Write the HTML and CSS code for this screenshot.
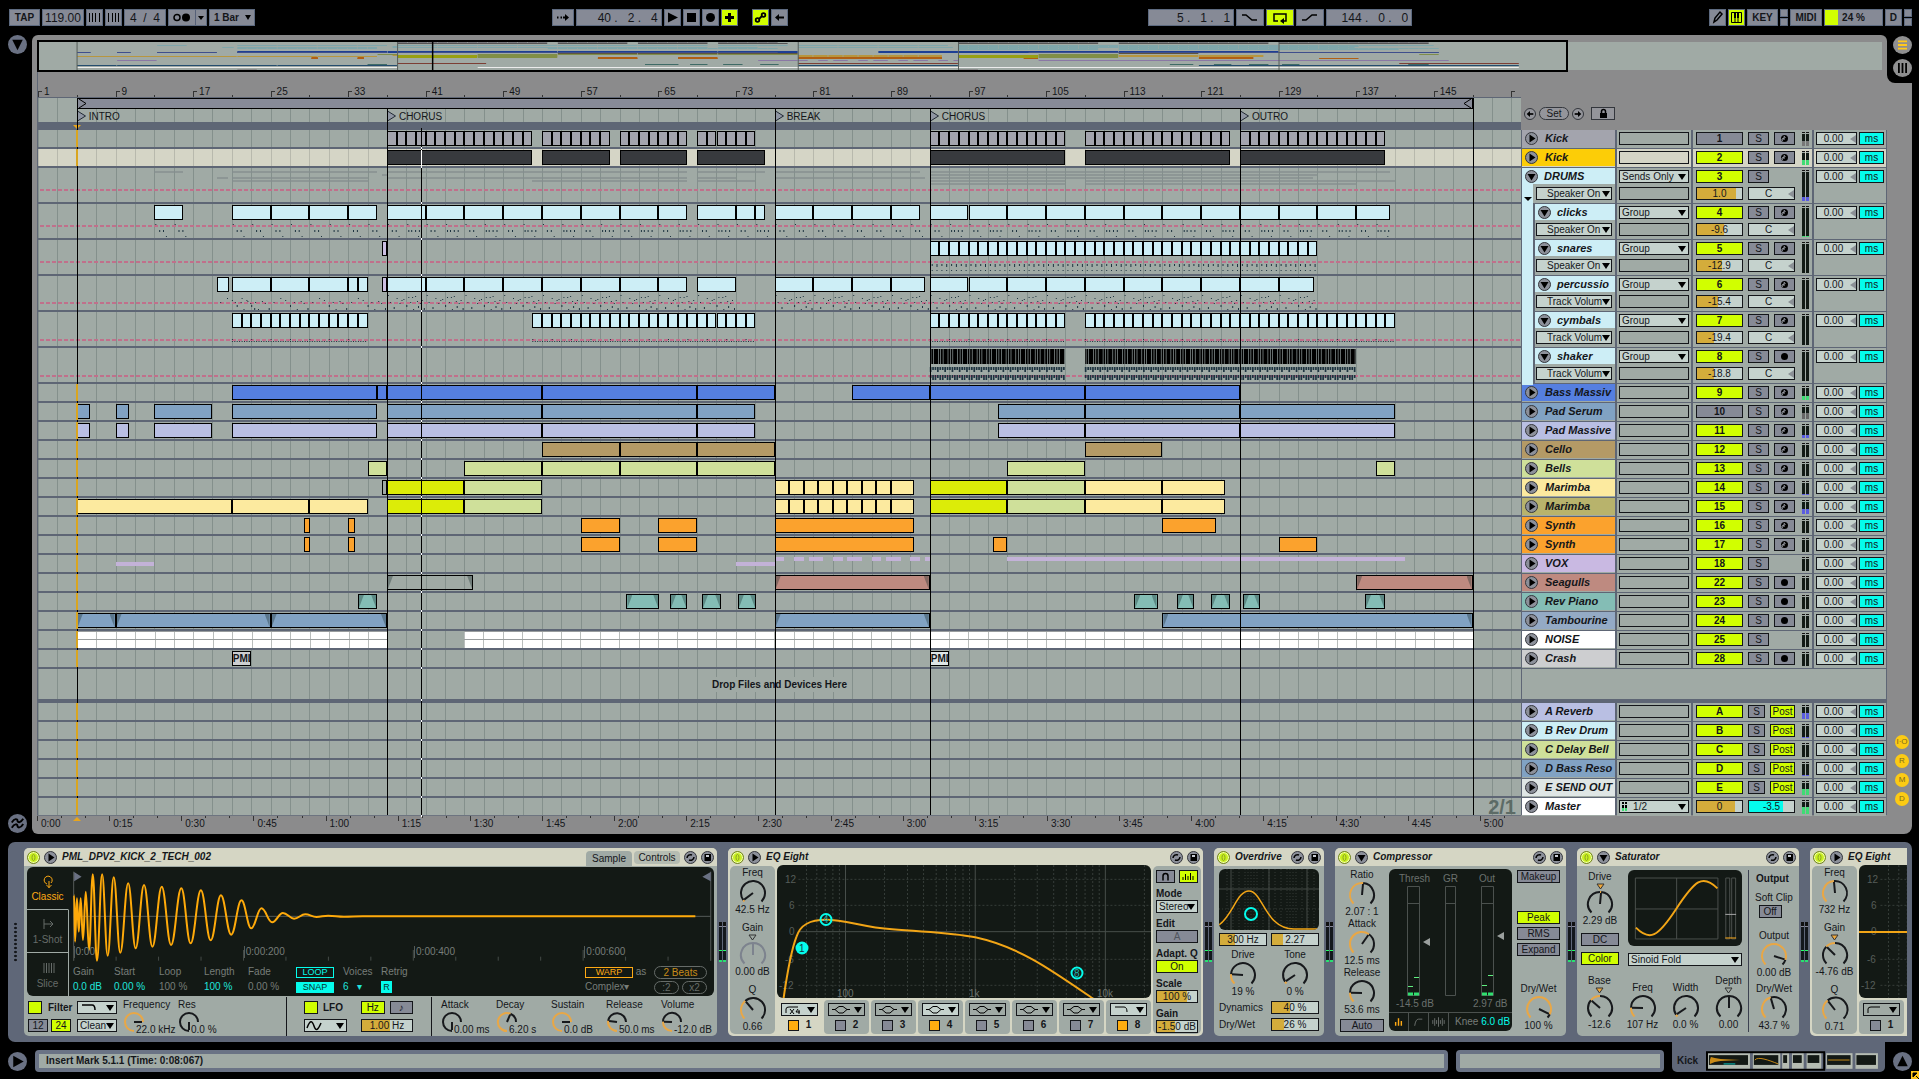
FILE: index.html
```html
<!DOCTYPE html>
<html lang="en">
<head>
<meta charset="utf-8">
<title>Arrangement</title>
<link rel="stylesheet" href="styles.css">
</head>
<body>
<header class="transport">
  <div class="tools g1">
    <button class="tb w31">TAP</button>
    <input class="tb num w42" aria-label="Tempo" value="119.00">
    <button class="tb w17" aria-label="Nudge down"><svg viewBox="0 0 15 15"><path d="M2.500 3v9M5.500 3v9M8.500 3v9M12.500 3v9" class="ln"/></svg></button>
    <button class="tb w17" aria-label="Nudge up"><svg viewBox="0 0 15 15"><path d="M2.500 3v9M6.500 3v9M9.500 3v9M12.500 3v9" class="ln"/></svg></button>
    <input class="tb num w42" aria-label="Time signature" value="4  /  4">
    <button class="tb w39" aria-label="Metronome"><svg viewBox="0 0 37 15"><circle cx="8" cy="7.500" r="3" class="ln15"/><circle cx="17" cy="7.500" r="4"/><path d="M26.500 0v15" stroke="#566078"/><path d="M29 6h6l-3 4z"/></svg></button>
    <span class="sel w46"><select class="tb bold" aria-label="Quantization"><option>1 Bar</option></select></span>
  </div>
  <div class="tools g2">
    <button class="tb w22" aria-label="Follow"><svg viewBox="0 0 20 15"><path d="M4 7.500h1.500M7.500 7.500h1.500M10 7.500h3" class="ln2"/><path d="M12 4l4 3.500-4 3.500z"/></svg></button>
    <input class="tb num w86 pos" aria-label="Position" value="40 .   2 .   4">
    <button class="tb w17" aria-label="Play"><svg viewBox="0 0 15 15"><path d="M3 2.500l10 5-10 5z"/></svg></button>
    <button class="tb w17" aria-label="Stop"><svg viewBox="0 0 15 15"><path d="M3 3h9v9h-9z"/></svg></button>
    <button class="tb w17" aria-label="Record"><svg viewBox="0 0 15 15"><circle cx="7.500" cy="7.500" r="4.500"/></svg></button>
    <button class="tb w17 on" aria-label="Overdub"><svg viewBox="0 0 15 15"><path d="M7.500 3v9M3 7.500h9" stroke="#000" stroke-width="3"/></svg></button>
    <button class="tb w17 on apart" aria-label="Automation arm"><svg viewBox="0 0 15 15"><g fill="none" stroke="#000" stroke-width="1.800"><circle cx="4.500" cy="10" r="1.800"/><circle cx="10.500" cy="5" r="1.800"/><path d="M6 9l3-3"/></g></svg></button>
    <button class="tb w17" aria-label="Back to arrangement"><svg viewBox="0 0 15 15"><path d="M6 7.500h6" class="ln2"/><path d="M3 7.500l4-3.500v7z"/></svg></button>
  </div>
  <div class="tools g3">
    <input class="tb num w86 pos" aria-label="Loop start" value="5 .   1 .   1">
    <button class="tb w28" aria-label="Punch in"><svg viewBox="0 0 26 15"><path d="M5 5h4l6 5h5" class="ln15"/></svg></button>
    <button class="tb w28 on" aria-label="Loop"><svg viewBox="0 0 26 15"><path d="M11 11H7V4h12v7h-4" class="ln15"/><path d="M17 8v6l-4-3z"/></svg></button>
    <button class="tb w28" aria-label="Punch out"><svg viewBox="0 0 26 15"><path d="M5 10h4l6-5h5" class="ln15"/></svg></button>
    <input class="tb num w86 pos" aria-label="Loop length" value="144 .   0 .   0">
  </div>
  <div class="tools g4">
    <button class="tb w17" aria-label="Draw"><svg viewBox="0 0 15 15"><path d="M4 12l1-4 5-6 2 2-5 6z" fill="none" stroke="#000" stroke-width="1.500"/></svg></button>
    <button class="tb w17 on" aria-label="Computer keyboard"><svg viewBox="0 0 15 15"><path d="M2.500 2.500h10v10h-10zM6 8v4.500M9 8v4.500" class="ln"/><path d="M5 3h2v5h-2zM8 3h2v5h-2z"/></svg></button>
    <button class="tb w31">KEY</button>
    <span class="leds"><i></i><i></i></span>
    <button class="tb w32">MIDI</button>
    <span class="tb w59 cpu">24 %</span>
    <button class="tb w17">D</button>
    <span class="leds"><i></i><i></i></span>
  </div>
</header>

<main class="main">
  <aside class="gutter">
    <button class="disc" aria-label="Show browser"><svg viewBox="0 0 20 20"><path d="M4.500 5h11l-5.500 11z" fill="#000"/></svg></button>
    <button class="disc" aria-label="Groove pool"><svg viewBox="0 0 20 20"><path d="M4 9c3-5 6-4 6-2s3 3 6-2M4 14.500c3-5 6-4 6-2s3 3 6-2" fill="none" stroke="#000" stroke-width="2"/></svg></button>
  </aside>
  <section class="work">
    <div class="overview" id="overview"></div>
    <div class="editor">
      <div class="top">
        <div class="scale">
          <div class="bars" id="bars"></div>
          <div class="loopline"><div class="loop" id="loop"></div></div>
          <div class="locators" id="locators"></div>
          <div class="scrub"><i></i></div>
        </div>
        <div class="setrow">
          <button class="mini" aria-label="Previous locator"><svg viewBox="0 0 12 12"><path d="M5 6h5" class="ln2"/><path d="M2 6l4-3.500v7z"/></svg></button>
          <button class="pill">Set</button>
          <button class="mini" aria-label="Next locator"><svg viewBox="0 0 12 12"><path d="M2 6h5" class="ln2"/><path d="M10 6l-4-3.500v7z"/></svg></button>
          <button class="lock" aria-label="Lock envelopes"><svg viewBox="0 0 22 11"><path d="M8 5h7v5h-7z"/><path d="M9.500 5V3.500a2 2 0 0 1 4 0V5" class="ln15"/></svg></button>
        </div>
      </div>
      <div id="tracks"></div>
      <div class="droprow"><div class="lane"><span>Drop Files and Devices Here</span></div><div class="void"></div></div>
      <div id="returns"></div>
      <div class="markers" id="markers"></div>
      <div class="fixed">2/1</div>
    </div>
    <div class="times" id="times"></div>
  </section>
  <aside class="rail">
    <div class="notch">
      <button class="view" aria-label="Arrangement view"><svg viewBox="0 0 20 20"><path d="M5 6h10M5 10h10M5 14h10" stroke="#ffc81c" stroke-width="2"/></svg></button>
      <button class="view" aria-label="Session view"><svg viewBox="0 0 20 20"><path d="M6 4.500v11M10 4.500v11M14 4.500v11" stroke="#000" stroke-width="2"/></svg></button>
    </div>
    <div class="sections"><button>I·O</button><button>R</button><button>M</button><button>D</button></div>
  </aside>
</main>

<section class="chain" id="chain"></section>

<footer class="status">
  <button class="disc" aria-label="Info view"><svg viewBox="0 0 20 20"><path d="M5.500 4l11 6-11 6z" fill="#000"/></svg></button>
  <div class="info grow">Insert Mark 5.1.1 (Time: 0:08:067)</div>
  <div class="info w208"></div>
  <div class="tab"><span>Kick</span><svg class="thumbs" viewBox="0 0 178 20" id="thumbs"></svg></div>
  <button class="disc last" aria-label="Hide detail"><svg viewBox="0 0 20 20"><path d="M4.500 15h11l-5.500-11z" fill="#000"/></svg></button>
  <svg class="corner" viewBox="0 0 8 8"><path d="M0 0h8v8h-8z" fill="#ffc81c"/><path d="M2 2h4l-4 4zM5 5l3 3" stroke="#000" fill="#000"/></svg>
</footer>
<script src="app.js"></script>
</body>
</html>
```

FILE: styles.css
```css
:root {
  --lane: #a0aaa5;
  --line: #5e6675;
  --grid: #84908c;
  --panel: #8b8b8c;
  --btn: #868a96;
  --field: #c5d2cd;
  --on: #d1ff00;
  --cream: #d5d6c4;
  --cyan: #05fcec;
  --gold: #d4ac3b;
  --amber: #ffaa14;
  --screen: #131915;
  --dim: #777d79;
  --ink: #14161a;
}
* { box-sizing: border-box; }
body {
  margin: 0;
  min-height: 100vh;
  background: #000;
  color: var(--ink);
  font: 10px/12px "Liberation Sans", Arial, sans-serif;
  display: flex;
  flex-direction: column;
  overflow-x: hidden;
}
button, input, select { font: inherit; color: inherit; margin: 0; padding: 0; border-radius: 0; min-width: 0; }
button { display: block; line-height: 11px; }
svg { display: block; width: 100%; height: 100%; }
.ln { fill: none; stroke: #000; }
.ln15 { fill: none; stroke: #000; stroke-width: 1.5; }
.ln2 { fill: none; stroke: #000; stroke-width: 2; }

/* transport bar */
.transport {
  height: 35px;
  padding: 9px 7px 9px 9px;
  display: grid;
  grid-template-columns: auto 297fr auto 361fr auto 297fr auto;
}
.tools { display: flex; gap: 2px; }
.g1 { grid-column: 1; } .g2 { grid-column: 3; } .g3 { grid-column: 5; } .g4 { grid-column: 7; }
.tb { height: 17px; background: var(--btn); border: 1px solid #5d6a80; font-weight: bold; text-align: center; line-height: 15px; }
.num { font-size: 12px; font-weight: normal; }
.pos { text-align: right; padding-right: 3px; white-space: pre; }
.on { background: var(--on); }
.apart { margin-left: 12px; }
.w17 { width: 17px; } .w22 { width: 22px; } .w28 { width: 28px; } .w31 { width: 31px; } .w32 { width: 32px; }
.w39 { width: 39px; } .w42 { width: 42px; } .w46 { width: 46px; } .w59 { width: 59px; } .w86 { width: 86px; }
.w208 { width: 208px; }
.cpu { background: linear-gradient(90deg, var(--on) 13px, var(--btn) 13px); }
.leds { width: 8px; display: flex; flex-direction: column; gap: 1px; }
.leds i { flex: 1; background: var(--btn); border: 1px solid #5d6a80; }

/* drop-downs */
.sel { position: relative; display: block; height: 13px; }
.sel select { appearance: none; width: 100%; height: 100%; background: var(--field); border: 1px solid var(--ink); padding: 0 0 0 2px; line-height: 11px; display: block; outline: 0; }
.sel::after { content: ""; position: absolute; right: 3px; top: 4px; border: 4px solid transparent; border-top: 6px solid #000; border-bottom: 0; pointer-events: none; }
.sel svg { position: absolute; left: 2px; top: 0; width: 24px; height: 13px; pointer-events: none; }
.tools .sel { height: 17px; }
.tools .sel select { background: var(--btn); border-color: #5d6a80; padding-left: 4px; font-weight: bold; text-align: left; }
.tools .sel::after { border-width: 5px 3px 0; top: 6px; right: 4px; }
.sel.off select { background: var(--lane); }

/* main frame */
.main { display: flex; margin-right: 7px; }
.gutter { width: 32px; padding: 0 5px 1px 8px; display: flex; flex-direction: column; justify-content: space-between; }
.disc { width: 19px; height: 19px; border: 0; border-radius: 50%; background: #6a7183; }
.work { flex: 1; min-width: 0; background: var(--panel); border-radius: 6px 6px 0 6px; padding: 5px 0 0 5px; }
.rail { width: 25px; background: var(--panel); border-radius: 0 8px 8px 0; display: flex; flex-direction: column; justify-content: space-between; }
.notch { height: 48px; width: 32px; background: #000; border-bottom-left-radius: 8px; padding: 1px 6px; display: flex; flex-direction: column; gap: 5px; }
.view { width: 19px; height: 18px; border: 0; border-radius: 50%; background: #8f8f90; }
.sections { padding: 0 0 28px 8px; display: flex; flex-direction: column; gap: 5px; }
.sections button { width: 14px; height: 14px; border: 0; border-radius: 50%; background: #fccb14; color: #7b6a1e; font-size: 8px; line-height: 14px; }

/* overview strip */
.overview { position: relative; height: 32px; margin-right: 5px; padding: 2px 0; }
.overview svg { background: var(--lane); }
.overview .frame { position: absolute; left: 0; top: 0; height: 32px; width: 83%; border: 2px solid #000; }

/* rulers */
.editor { position: relative; }
.top { display: flex; }
.scale { flex: 1; min-width: 0; border-left: 1px solid var(--line); }
.bars { position: relative; height: 26px; border-bottom: 1px solid var(--line); overflow: hidden; }
.bars span { position: absolute; bottom: 0; height: 6px; border-left: 1px solid #333; padding-left: 5px; line-height: 2px; }
.bars span.minor { height: 2px; }
.bars span::before { content: ""; position: absolute; left: 0; top: 0; width: 3px; border-top: 1px solid #333; }
.bars span.minor::before { display: none; }
.loopline, .locators, .lane {
  background: repeating-linear-gradient(90deg, var(--grid) 0 1px, var(--lane) 1px calc(100% / 76.5));
}
.loopline { height: 11px; position: relative; }
.loop { position: absolute; top: 0; height: 11px; background: #878b98; border: 1px solid #000; }
.loop svg { position: absolute; top: 0; width: 10px; height: 9px; left: 0; }
.loop svg + svg { left: auto; right: 0; }
.locators { height: 13px; position: relative; }
.locators span { position: absolute; top: 0; padding-left: 12px; line-height: 15px; white-space: nowrap; }
.locators svg { position: absolute; left: 0; top: 1px; width: 10px; height: 12px; }
.scrub { height: 8px; background: var(--line); position: relative; }
.scrub i { position: absolute; left: calc(100% * 4 / 153 - 4px); top: 3px; border: 4px solid transparent; border-top-color: #e9a51c; border-bottom: 0; }
.setrow { width: 366px; display: flex; align-items: flex-end; padding: 0 0 10px 3px; gap: 3px; }
.mini { width: 12px; height: 12px; border: 1px solid #33363c; border-radius: 50%; background: #94959b; }
.pill { width: 30px; height: 13px; border: 1px solid #33363c; border-radius: 7px; background: #94959b; }
.lock { width: 24px; height: 13px; border: 1px solid #33363c; background: #94959b; margin-left: 4px; }

/* tracks */
.track { display: flex; height: 19px; border-bottom: 2px solid var(--line); border-left: 1px solid var(--line); }
.track.tall { height: 36px; }
.track.mst { height: 17px; border-bottom: 0; }
.lane { flex: 1; min-width: 0; position: relative; }
.track.sel-track .lane { background: repeating-linear-gradient(90deg, #b8b9ad 0 1px, #d5d5c6 1px calc(100% / 76.5)); }
.track:not(.tall) .lane::after { content: ""; position: absolute; z-index: 2; top: 0; bottom: 0; left: calc(100% * 4 / 153 - 1px); width: 2px; background: #d9a520; }
.lane::before { content: ""; position: absolute; z-index: 2; bottom: -2px; height: 2px; width: 1px; left: calc(100% * 39.55 / 153); background: #fff; }
.sel-track .lane::before { height: 18px; }
.lane > svg.notes { position: absolute; inset: 0; }
.auto { position: absolute; left: 2px; right: 0; height: 2px; background: repeating-linear-gradient(90deg, #c0708b 0 4px, transparent 4px 6px); }
.clip { position: absolute; top: 1px; height: 15px; border: 1px solid #000; overflow: hidden; font: bold 10px/13px "Liberation Sans", Arial, sans-serif; white-space: nowrap; }
.fade::before, .fade::after { content: ""; position: absolute; top: 0; bottom: 0; left: 0; width: 5px; background: rgba(20, 40, 40, .35); clip-path: polygon(0 0, 100% 0, 0 100%); }
.fade::after { left: auto; right: 0; clip-path: polygon(0 0, 100% 0, 100% 100%); }
.bar { position: absolute; height: 4px; background: #c3b2d8; }
.ghost { position: absolute; height: 2px; background: #858d8e; opacity: .7; }
.fill { position: absolute; top: 0; height: 17px; background: linear-gradient(#999d9e 0 1px, transparent 1px 8px, #999d9e 8px 9px, transparent 9px), repeating-linear-gradient(90deg, #b9bdbc 0 1px, #fff 1px 19.4px); }
.grey { background: #a3a4ad; } .dark { background: #383a3e; } .ice { background: #cdeef6; } .lilac { background: #cbbfe2; }
.blue { background: #557fe0; } .steel { background: #81a2c3; } .peri { background: #b9bfe3; } .tan { background: #b49a66; }
.lime { background: #cfe09a; } .acid { background: #dcec08; } .butter { background: #fcea9f; } .olive { background: #b8b36c; }
.orange { background: #fba22d; } .mauve { background: #c9b9e2; } .rose { background: #be8a80; } .teal { background: #84bdb5; }
.haze { background: #94aac5; } .white { background: #fff; } .silver { background: #cdced0; } .none { background: transparent; }
.gold { background: #fccd07; } .pale { background: #dfe6e5; } .black { background: #000; }

.markers { position: absolute; top: 37px; bottom: 0; left: 1px; right: 366px; pointer-events: none; z-index: 1; }
.markers i { position: absolute; top: 0; bottom: 0; width: 1px; background: #000; }
.markers i.play { top: 19px; }
.fixed { position: absolute; right: 371px; bottom: -2px; font: bold 20px/20px "Liberation Sans", Arial, sans-serif; color: #5c6b66; }
.droprow { display: flex; height: 34px; border-bottom: 4px solid var(--line); border-left: 1px solid var(--line); }
.droprow .lane { text-align: center; font-weight: bold; line-height: 32px; }
.droprow .lane span { padding: 2px; background: var(--lane); }
.void { width: 366px; background: var(--lane); border: 1px solid var(--line); border-width: 0 1px; }

/* track heads */
.head { width: 366px; display: grid; grid-template-columns: 93px 74px 119px 72px; column-gap: 2px; background: var(--line); border: 1px solid var(--line); border-width: 0 1px; }
.head > div { background: var(--lane); }
.sel-track .head > div { background: #d5d5c6; }
.name { position: relative; }
.title { height: 17px; display: flex; align-items: center; gap: 7px; padding-left: 3px; font: italic bold 11px/17px "Liberation Sans", Arial, sans-serif; white-space: nowrap; overflow: hidden; }
.fold { flex: none; width: 13px; height: 13px; border: 1px solid #34363c; border-radius: 50%; background: #8c909a; }
.tall .title { height: 16px; gap: 6px; }
.name .sel { margin: 3px 3px 0 14px; }
.name .sel select { padding-left: 10px; }
.name .sel::after { right: 2px; }
.group .name::before, .child .name::before { content: ""; position: absolute; left: 0; top: 16px; bottom: -2px; width: 11px; background: #cdeef6; z-index: 1; }
.child .name::before { top: 0; }
.child .name::after { content: ""; position: absolute; left: 11px; top: 0; bottom: 0; width: 2px; background: var(--line); }
.child .title { margin-left: 13px; }
.group .name > i { position: absolute; z-index: 2; left: 2px; top: 29px; border: 4px solid transparent; border-top-color: #000; border-bottom: 0; }
.io { padding: 2px; display: flex; flex-direction: column; gap: 4px; }
.slot { height: 13px; border: 1px solid var(--ink); }
.mix { padding: 2px 3px; display: flex; gap: 7px; }
.ctl { display: grid; grid-template-columns: 47px 47px; column-gap: 5px; row-gap: 4px; grid-auto-rows: 13px; }
.pair { display: flex; justify-content: space-between; }
.act, .sw, .val { height: 13px; border: 1px solid var(--ink); text-align: center; line-height: 11px; width: 100%; }
.act { font-weight: bold; background: var(--on); }
.act.off, .sw { background: var(--btn); }
.pair .sw { width: 21px; }
.ret .pair .sw { width: 17px; }
.ret .pair .post { width: 25px; background: var(--on); }
.val { background: linear-gradient(90deg, var(--gold) var(--f, 0%), var(--field) 0); display: block; outline: 0; }
.val.cy { background: linear-gradient(90deg, var(--cyan) var(--f), var(--field) 0); }
.meter { width: 7px; height: 14px; display: flex; gap: 1px; }
.tall .meter { height: 31px; }
.meter i { flex: 1; background: linear-gradient(0deg, var(--c) var(--l), #111a15 0); border-top: 1px solid #111; box-shadow: inset 0 1px var(--lane); }
.dly { padding: 2px; display: flex; justify-content: space-between; }
.knobtri { position: relative; display: block; }
.knobtri::after { content: ""; position: absolute; right: 1px; top: 3px; border: 4px solid transparent; border-right: 6px solid #8b9096; border-left: 0; }
.dly .knobtri { width: 41px; }
.knobtri .val { padding-right: 6px; }
.ms { width: 25px; height: 13px; border: 1px solid var(--ink); background: var(--cyan); }

.times { position: relative; height: 19px; border-top: 1px solid #6d7480; margin-right: 366px; overflow: hidden; }
.times span { position: absolute; top: 0; height: 5px; border-left: 1px solid #333; padding-left: 3px; line-height: 16px; white-space: nowrap; }
.times span.minor { height: 2px; }
.times i { position: absolute; left: calc(100% * 4 / 153 - 3px); top: 1px; border: 4px solid transparent; border-bottom-color: #e9a51c; border-top: 0; }

/* device chain */
.chain { margin: 8px 7px 0 8px; background: #5f6778; border-radius: 7px 7px 0 7px; padding: 6px 5px 6px 0; display: flex; min-height: 200px; }
.grip { width: 16px; align-self: center; height: 40px; background: radial-gradient(#14161a 1px, transparent 2px) 5px 0 / 5px 4px repeat-y; }
.device { height: 188px; background: var(--lane); border-radius: 5px; overflow: hidden; display: flex; flex-direction: column; }
.d-sim { flex: 0 0 693px; } .d-eq { flex: 0 0 475px; background: var(--cream); } .d-over { flex: 0 0 110px; } .d-comp { flex: 0 0 231px; } .d-sat { flex: 0 0 222px; }
.d-eq.last { flex: 1 1 0; min-width: 0; border-radius: 5px 0 0 5px; }
.link { flex: 0 0 11px; display: flex; justify-content: center; align-self: center; gap: 1px; height: 40px; }
.link i { width: 3px; background: linear-gradient(#111 0 4px, #889 4px 5px, #14181c 5px 28px, #2f6 28px 29px, #14181c 29px 38px, #28e070 38px); }
.dh { height: 18px; flex: none; background: var(--cream); display: flex; align-items: center; gap: 4px; padding: 0 3px; line-height: 16px; white-space: nowrap; }
.dh b { flex: 1; padding-left: 1px; font-style: italic; }
.pw, .rd { flex: none; width: 13px; height: 13px; border-radius: 50%; border: 1px solid #34363c; background: #8c909a; }
.pw { background: #c8f020; border-color: #6f8020; box-shadow: inset 0 0 0 1px #f4ffb0; }
.dtab { align-self: flex-end; height: 15px; width: 46px; border: 0; border-radius: 4px 4px 0 0; background: var(--lane); margin-right: -2px; }
.dtab + .dtab { background: #b5bcb2; border-radius: 4px; height: 13px; align-self: center; margin-right: 0; }
.scr { background: var(--screen); border-radius: 6px; color: var(--dim); overflow: hidden; }
.btn { height: 13px; border: 1px solid var(--ink); background: var(--btn); text-align: center; width: 100%; }
.btn.on { background: var(--on); }
.btn.mute { color: #50555f; }

/* simpler */
.sim { height: 129px; margin: 1px 3px 0; display: grid; grid-template-columns: 42px 1fr; }
.modes { display: grid; grid-template-rows: 43px 43px 43px; border-right: 1px solid var(--lane); }
.modes button { border: 0; border-bottom: 1px solid var(--lane); background: none; color: #666c69; }
.modes button:first-child { color: var(--amber); border-right: 1px solid var(--screen); margin-right: -1px; }
.modes button:last-child { border-bottom: 0; }
.modes svg { width: 20px; height: 14px; margin: 0 auto 3px; }
.wave { position: relative; height: 96px; }
.wave span { position: absolute; top: 79px; line-height: 12px; border-left: 1px solid #555b58; padding-left: 1px; }
.prm { display: grid; grid-template-columns: 41px 45px 45px 44px 48px 47px 38px 1fr 48px 21px 55px; grid-template-rows: 14px 14px; row-gap: 1px; padding: 2px 5px 0 4px; align-items: center; white-space: nowrap; }
.c { color: #1fe4dc; }
.prm button { height: 11px; line-height: 9px; width: 38px; font-size: 9px; background: none; border: 1px solid var(--cyan); color: var(--cyan); }
.prm button.full { background: var(--cyan); color: #073030; }
.prm button.r { width: 11px; height: 12px; }
.prm button.warp { width: 48px; border-color: var(--amber); color: var(--amber); }
.prm button.rnd { width: 53px; border: 1px solid #666c69; color: #c78c1a; border-radius: 7px; height: 13px; font-size: 10px; line-height: 11px; }
.prm button.half { width: 25px; color: #666c69; }
.prm .two { display: flex; gap: 3px; }
.strip { flex: 1; display: flex; padding: 2px 1px 0 4px; }
.strip .sw2 { width: 14px; height: 13px; appearance: none; margin: 0; border: 1px solid var(--ink); background: var(--on); display: block; }
.flt { display: grid; grid-template-columns: 45px 40px; row-gap: 5px; column-gap: 4px; width: 95px; align-content: start; padding-top: 3px; }
.flt .row, .lfo .row { display: flex; gap: 5px; align-items: center; }
.flt label, .lfo label { font-weight: bold; }
.flt .row { gap: 3px; }
.flt .row.first { gap: 6px; }
.flt .btn { width: 20px; }
.hk { width: 55px; height: 38px; position: relative; white-space: nowrap; padding-top: 1px; }
.hk svg { width: 22px; height: 22px; }
.hk span { position: absolute; left: 13px; bottom: 0; }
.gap { flex: 1; }
.rule { width: 1px; background: var(--ink); margin: -1px 0 0; }
.lfo { width: 144px; padding: 3px 17px 0; display: grid; grid-template-columns: 43px 52px; column-gap: 14px; row-gap: 5px; align-content: start; }
.envs { display: flex; padding-left: 9px; }

/* round controls */
.vk { display: flex; flex-direction: column; align-items: center; white-space: nowrap; line-height: 12px; }
.vk svg.k { width: 28px; height: 25px; }
.vk .tri { width: 9px; height: 7px; }

/* eq */
.eq { flex: 1; display: grid; grid-template-columns: 45px 374px 48px; column-gap: 2px; padding: 0 2px 2px; grid-template-rows: 168px; }
.col { background: var(--lane); border-radius: 5px; display: flex; flex-direction: column; justify-content: space-between; padding: 1px 0; }
.eqmid { display: flex; flex-direction: column; gap: 2px; }
.eqmid .scr { height: 133px; flex: none; margin-top: -1px; }
.bands { display: grid; grid-template-columns: repeat(8, 45px); column-gap: 2px; flex: 1; }
.band { background: var(--lane); border-radius: 4px; padding: 3px 4px; }
.band.cur { background: var(--cream); }
.band label { display: flex; align-items: center; justify-content: center; gap: 7px; font-weight: bold; margin-top: 3px; }
.band input { appearance: none; width: 11px; height: 11px; margin: 0; border: 1px solid var(--ink); background: var(--btn); }
.band input:checked { background: #ffad10; }
.side { background: var(--lane); border-radius: 5px; padding: 4px 3px; display: flex; flex-direction: column; }
.side b { margin-top: 5px; }
.side label { font-weight: bold; margin-top: 5px; }
.side > div { display: flex; justify-content: space-between; }
.side > div .btn { width: 19px; }

/* overdrive */
.over { flex: 1; padding: 3px 5px 5px; display: flex; flex-direction: column; gap: 3px; }
.over .scr { height: 61px; }
.pairs { display: grid; grid-template-columns: 48px 48px; column-gap: 4px; row-gap: 4px; align-items: center; }

/* compressor */
.comp { flex: 1; display: grid; grid-template-columns: 44px 123px 43px; column-gap: 5px; padding: 3px 5px 5px; }
.comp .btn.auto-rel { margin-top: 3px; }
.comp .scr { display: flex; flex-direction: column; height: 162px; }
.comp .foot { height: 19px; border-top: 1px solid #4b514e; display: grid; grid-template-columns: 20px 20px 20px 1fr; line-height: 18px; }
.comp .foot > * { border-right: 1px solid #4b514e; }
.comp .foot > :last-child { border: 0; padding-left: 6px; }
.comp .foot .c { color: var(--cyan); }
.comp svg.gr { height: 143px; }
.stack { display: flex; flex-direction: column; gap: 3px; padding-top: 1px; }
.stack .top1 { margin-bottom: 25px; }
.stack .vk { margin-top: 24px; }

/* saturator */
.sat { flex: 1; display: grid; grid-template-columns: 172px 1fr; padding: 4px 0 5px; }
.satl { border-right: 1px solid #3c4150; display: grid; grid-template-columns: 46px 1fr; grid-template-rows: 97px 1fr; }
.satl .leftc { padding: 1px 4px 0; }
.satl .leftc .btn { margin-top: 6px; }
.satl .rightc { padding: 0 6px 0 5px; }
.satl .rightc .scr { height: 76px; margin-bottom: 7px; }
.satl .four { grid-column: 1 / 3; display: grid; grid-template-columns: repeat(4, 43px); align-items: end; padding-left: 1px; padding-bottom: 1px; }
.satr { display: flex; flex-direction: column; align-items: center; }
.satr .btn { width: 23px; margin: 1px 8px 12px 0; }
.satr b { align-self: flex-start; padding-left: 7px; margin: 3px 0 7px; }
.satr .vk + .vk { margin-top: 4px; }

/* status */
.status { display: flex; gap: 8px; padding: 8px 7px 7px 8px; position: relative; height: 37px; }
.status .disc { margin-top: 2px; flex: none; }
.info { height: 22px; border: 4px solid #6a7385; border-radius: 4px; background: var(--lane); font-weight: bold; line-height: 14px; padding-left: 7px; }
.grow { flex: 1; }
.tab { margin-top: -8px; height: 30px; width: 213px; background: #5f6778; border-radius: 0 0 5px 5px; padding: 9px 5px 1px 5px; display: flex; gap: 8px; font-weight: bold; line-height: 20px; }
.thumbs { width: 178px; height: 20px; }
.corner { position: absolute; right: 0; bottom: 0; width: 8px; height: 8px; }
```

FILE: app.js
```js
const BARS = 153;
const $ = id => document.getElementById(id);
const pct = (b, total = BARS) => ((b - 1) / total * 100).toFixed(3) + '%';
const wid = (a, b, total = BARS) => ((b - a) / total * 100).toFixed(3) + '%';

// Cuts a bar range into clips of equal length; the last one may be shorter.
const cut = (from, to, step) => {
  const out = [];
  for (let a = from; a < to; a += step) out.push([a, Math.min(a + step, to)]);
  return out;
};
const chop = pts => pts.slice(1).map((p, i) => [pts[i], p]);

const hits = [[37, 52], [53, 60], [61, 68], [69, 76], [93, 107], [109, 124], [125, 140]];
const pad = [[5, 6.4], [9, 10.4], [13, 19], [21, 36], [37, 53], [53, 69], [69, 75], [100, 109], [109, 125], [125, 141]];
const stabs = chop([77, 78.5, 80, 81.5, 83, 84.5, 86, 87.5, 89, 91.4]);
const piano = [[34, 36], [61.7, 65.1], [66.2, 68], [69.5, 71.5], [73.2, 75.1], [114.1, 116.5], [118.5, 120.3], [122, 124], [125.3, 127.1], [137.9, 140]];
const hues = (h, list) => list.map(c => [c[0], c[1], h]);

const tracks = [
  { n: 'Kick', c: 'grey', id: '1', off: 1, rec: 'm', oy: 0, oc: '#77777c', m: ['#777', 40], clips: hits.flatMap(h => cut(h[0], h[0] === 69 ? 75 : h[1], 1)) },
  { n: 'Kick', c: 'gold', id: '2', rec: 'm', picked: 1, oy: 1, oc: '#555', m: ['#3fdc74', 35], clips: hues('dark', hits) },
  { n: 'DRUMS', c: 'ice', id: '3', group: 1, io: 'Sends Only', dev: 'Speaker On', vol: ['1.0', 86], auto: 21, m: ['#5a5ce0', 14], ghosts: [
    [13, 16, 3], [21, 36, 3], [19.5, 20.6, 9], [21, 35, 9], [21, 35, 12], [36.5, 37, 6], [37, 68, 3], [69, 76, 3], [77, 92, 3], [93, 140.5, 3],
    [93, 133, 6], [37, 68, 9], [69, 73, 9], [77, 92.5, 9], [93, 132.5, 9], [52, 68, 12], [69, 75, 12], [93, 107, 12], [109, 141, 12], [93, 107, 15], [109, 137, 15]] },
  { n: 'clicks', c: 'ice', id: '4', child: 1, io: 'Group', dev: 'Speaker On', vol: ['-9.6', 60], auto: 21, rec: 'm', oy: 3, oc: '#7fa6ab', m: ['#3fdc74', 4], notes: 'clicks',
    clips: [[13, 16], ...cut(21, 36, 4), ...cut(37, 68, 4), [69, 73], [73, 75], [75, 76], ...cut(77, 92, 4), ...cut(93, 140.5, 4)] },
  { n: 'snares', c: 'ice', id: '5', child: 1, io: 'Group', dev: 'Speaker On', vol: ['-12.9', 55], auto: 21, rec: 'm', oy: 4, oc: '#7fa6ab', m: ['#111', 0], notes: 'snares',
    clips: [[36.5, 37, 'lilac'], ...cut(93, 133, 1)] },
  { n: 'percussio', c: 'ice', id: '6', child: 1, io: 'Group', dev: 'Track Volum', vol: ['-15.4', 47], auto: 26, rec: 'm', oy: 5, oc: '#7fa6ab', m: ['#111', 0], notes: 'perc',
    clips: [[19.5, 20.7], ...cut(21, 33, 4), [33, 34], [34, 35], [36.5, 37, 'lilac'], ...cut(37, 68, 4), [69, 73], ...cut(77, 92.5, 4), ...cut(93, 132.6, 4)] },
  { n: 'cymbals', c: 'ice', id: '7', child: 1, io: 'Group', dev: 'Track Volum', vol: ['-19.4', 38], auto: 27, rec: 'm', oy: 6, oc: '#7fa6ab', m: ['#111', 0], notes: 'cym',
    clips: [...cut(21, 35, 1), ...cut(52, 75, 1), ...cut(93, 107, 1), ...cut(109, 141, 1)] },
  { n: 'shaker', c: 'ice', id: '8', child: 1, io: 'Group', dev: 'Track Volum', vol: ['-18.8', 38], auto: 27, rec: 'a', oy: 7, oc: '#7fa6ab', m: ['#111', 0], notes: 'shaker',
    clips: [[93, 107, 'black'], [109, 137, 'black']] },
  { n: 'Bass Massiv', c: 'blue', id: '9', rec: 'm', oy: 9, oh: 2, oc: '#1d3f94', m: ['#3fdc74', 28], clips: [[21, 36], [36, 37], [37, 53], [53, 69], [69, 77], [85, 93], [93, 109], [109, 125]] },
  { n: 'Pad Serum', c: 'steel', id: '10', off: 1, rec: 'm', oy: 10, oc: '#34527f', m: ['#666', 50], clips: pad },
  { n: 'Pad Massive', c: 'peri', id: '11', rec: 'm', oy: 10, oc: '#3f4f8c', m: ['#5a5ce0', 20], clips: pad },
  { n: 'Cello', c: 'tan', id: '12', rec: 'm', oy: 11, oc: '#5f553f', m: ['#111', 0], clips: [[53, 61], [61, 69], [69, 77], [109, 117]] },
  { n: 'Bells', c: 'lime', id: '13', rec: 'm', oy: 12, oc: '#7f8d4a', m: ['#111', 0], clips: [[35, 37], [45, 53], [53, 61], [61, 69], [69, 77], [101, 109], [139, 141]] },
  { n: 'Marimba', c: 'butter', id: '14', rec: 'm', oy: 13, oc: '#b7963f', m: ['#5a5ce0', 6], clips: [[36.5, 37, 'none'], [37, 45, 'acid'], [45, 53, 'lime'], ...stabs, [93, 101, 'acid'], [101, 109, 'lime'], [109, 117], [117, 123.5]] },
  { n: 'Marimba', c: 'olive', id: '15', rec: 'm', oy: 14, oc: '#b7963f', m: ['#5a5ce0', 42], clips: [...hues('butter', [[5, 21], [21, 29], [29, 35]]), [37, 45, 'acid'], [45, 53, 'lime'], ...hues('butter', stabs), [93, 101, 'acid'], [101, 109, 'lime'], ...hues('butter', [[109, 117], [117, 123.5]])] },
  { n: 'Synth', c: 'orange', id: '16', rec: 'm', oy: 15, oh: 2, oc: '#b05f14', m: ['#111', 0], clips: [[28.4, 29.1], [33, 33.7], [57, 61], [65, 69], [77, 91.4], [117, 122.5]] },
  { n: 'Synth', c: 'orange', id: '17', rec: 'm', oy: 16, oc: '#b05f14', m: ['#111', 0], clips: [[28.4, 29.1], [33, 33.7], [57, 61], [65, 69], [77, 91.4], [99.5, 101], [129, 133]] },
  { n: 'VOX', c: 'mauve', id: '18', oy: 18, oc: '#8a78a4', m: ['#111', 0], bars: [[9, 13, 7], [73, 77, 7], [77, 78, 2], [79, 80, 2], [80.5, 82, 2], [83, 84, 2], [84.5, 86, 2], [87, 88, 2], [88.5, 90, 2], [91, 92, 2], [92.5, 93, 2], [101, 142, 2]] },
  { n: 'Seagulls', c: 'rose', id: '22', rec: 'a', fade: 1, oy: 21, oc: '#7c3f35', m: ['#111', 0], clips: [[37, 45.9, 'none'], [77, 93], [137, 149]] },
  { n: 'Rev Piano', c: 'teal', id: '23', rec: 'a', fade: 1, oy: 22, oc: '#3f6b66', m: ['#111', 0], clips: piano },
  { n: 'Tambourine', c: 'haze', id: '24', rec: 'a', fade: 1, oy: 23, oc: '#244c6e', m: ['#111', 0], clips: hues('steel', [[5, 9], [9, 25], [25, 37], [77, 93], [117, 149]]) },
  { n: 'NOISE', c: 'white', id: '25', oy: 25, oc: '#ececec', m: ['#111', 0], fills: [[5, 37], [45, 149]] },
  { n: 'Crash', c: 'silver', id: '28', rec: 'a', oy: 27, oc: '#8a8a8a', m: ['#111', 0], clips: [[21, 23, 'silver', 'PML'], [93, 95, 'pale', 'PML']] }
];
const returns = [
  { n: 'A Reverb', c: 'peri', id: 'A', ret: 1, m: ['#5a5ce0', 45] },
  { n: 'B Rev Drum', c: 'ice', id: 'B', ret: 1, m: ['#5a5ce0', 6] },
  { n: 'C Delay Bell', c: 'lime', id: 'C', ret: 1, m: ['#111', 0] },
  { n: 'D Bass Reso', c: 'steel', id: 'D', ret: 1, m: ['#5a5ce0', 5] },
  { n: 'E SEND OUT', c: 'pale', id: 'E', ret: 1, m: ['#3fdc74', 45] },
  { n: 'Master', c: 'white', master: 1, m: ['#3fdc74', 55] }
];

const sel = (text, label, cls = '') => `<span class="sel ${cls}"><select aria-label="${label}"><option>${text}</option></select></span>`;
const foldIcon = open => `<svg viewBox="0 0 11 11"><path d="${open ? 'M1.500 3h8L5.500 9.500z' : 'M3.500 1.500l6 4-6 4z'}"/></svg>`;
const recIcon = kind => kind === 'a'
  ? '<svg viewBox="0 0 19 11"><circle cx="9.500" cy="5.500" r="3.500"/></svg>'
  : '<svg viewBox="0 0 19 11"><circle cx="9.500" cy="5.500" r="3.500"/><path d="M8 7.500a1 1 0 1 1 1-1V3.500l1.500 1" fill="none" stroke="#b9bcc6" stroke-width=".9"/></svg>';

function notes(kind) {
  const r = [];
  const px = b => (b - 1) * 9.693;
  const dot = (b, y, w = 1, h = 1, extra = '') => r.push(`<rect x="${px(b).toFixed(1)}" y="${y}" width="${w}" height="${h}"${extra}/>`);
  const each = (ranges, step, fn) => ranges.forEach(([a, z]) => { for (let b = a, i = 0; b < z - .1; b += step, i++) fn(b, i); });
  if (kind === 'clicks') each([[13, 16], [21, 36], [37, 68], [69, 76], [77, 92], [93, 140]], 2, (b, i) => {
    dot(b + .1, 20); dot(b + 1.2, 32);
    [.5, .9].forEach(o => dot(b + o, 26, 1, 2));
    if (i % 2 && b > 36 && (b < 77 || b > 92)) [.2, 1.3].forEach(o => dot(b + o, 26, 1, 2));
  });
  if (kind === 'snares') each([[93, 133]], .5, (b, i) => { dot(b + .2, 24, 1, i % 2 ? 3 : 2); dot(b + .2, 30); });
  if (kind === 'perc') {
    // One four-bar phrase, repeated under every clip
    const phrase = [[.1, 19], [.3, 26], [.7, 31], [1, 22], [1.3, 27], [1.5, 24], [1.7, 23], [2, 29], [2.2, 21], [2.4, 26], [2.6, 21], [2.7, 33], [2.9, 20], [3.1, 25], [3.2, 30], [3.4, 27], [3.6, 24], [3.8, 32]];
    each([[19.5, 20.7], [21, 35], [37, 68], [69, 73], [77, 92.5], [93, 132]], 4, b => {
      phrase.forEach(([o, y], i) => { if (b > 36 || i % 2) dot(b + o, y, 1, y > 28 ? 2 : 1); });
    });
  }
  if (kind === 'cym') each([[21, 35], [52, 75], [93, 107], [109, 141]], .25, (b, i) => { dot(b, 29); if (i % 8 === 0) dot(b, 27); });
  if (kind === 'shaker') each([[93, 107], [109, 137]], .25, (b, i) => {
    dot(b, 19, 1.7, i % 3 ? 3 : 5); dot(b, 27, 1.7, i % 3 ? 5 : 3);
    if (i % 4 !== 2) dot(b + .1, 1, .6, 15, ' fill="#a9b6b6"');
  });
  return `<svg class="notes" viewBox="0 0 1483 34" preserveAspectRatio="none" fill="#1d3340">${r.join('')}</svg>`;
}

function lane(t) {
  let h = '';
  (t.fills || []).forEach(([a, b]) => h += `<i class="fill" style="left:${pct(a)};width:${wid(a, b)}"></i>`);
  (t.clips || []).forEach(([a, b, c, txt]) => h += `<div class="clip ${c || t.c}${t.fade ? ' fade' : ''}" style="left:${pct(a)};width:${wid(a, b)}">${txt || ''}</div>`);
  (t.bars || []).forEach(([a, b, y]) => h += `<i class="bar" style="left:${pct(a)};width:${wid(a, b)};top:${y}px"></i>`);
  (t.ghosts || []).forEach(([a, b, y]) => h += `<i class="ghost" style="left:${pct(a)};width:${wid(a, b)};top:${y}px"></i>`);
  if (t.auto) h += `<i class="auto" style="top:${t.auto}px"></i>`;
  if (t.notes) h += notes(t.notes);
  return `<div class="lane">${h}</div>`;
}

function head(t) {
  const tall = !!t.dev;
  const title = `<div class="title ${t.c}"><button class="fold" aria-label="Fold ${t.n}">${foldIcon(tall)}</button><span>${t.n}</span></div>`;
  const name = `<div class="name">${title}${tall ? sel(t.dev, t.n + ' automation') : ''}${t.group ? '<i></i>' : ''}</div>`;
  let io = '<div class="slot"></div>';
  if (t.io) io = sel(t.io, t.n + ' output') + '<div class="slot"></div>';
  if (t.master) io = `<span class="sel cue"><select aria-label="Master output"><option>&nbsp;&nbsp;&nbsp; 1/2</option></select><svg viewBox="0 0 24 13"><path d="M1 2h2v2h-2zM4 2h2v2h-2zM1 5h2v3h-2zM4 5h2v3h-2z"/><path d="M1 8h2v3h-2zM4 8h2v3h-2z" fill="#3fdc74"/></svg></span>`;
  let ctl;
  if (t.master) {
    ctl = `<input class="val" aria-label="Master volume" value="0" style="--f:84%"><input class="val cy" aria-label="Cue volume" value="-3.5" style="--f:75%">`;
  } else {
    const second = t.ret ? '<button class="sw post">Post</button>' : t.rec ? `<button class="sw" aria-label="Arm ${t.n}">${recIcon(t.rec)}</button>` : '';
    ctl = `<button class="act${t.off ? ' off' : ''}">${t.id}</button><div class="pair"><button class="sw">S</button>${second}</div>`;
    if (tall) ctl += `<input class="val" aria-label="${t.n} volume" value="${t.vol[0]}" style="--f:${t.vol[1]}%"><span class="knobtri"><input class="val" aria-label="${t.n} pan" value="C"></span>`;
  }
  const lv = `<i style="--c:${t.m[0]};--l:${t.m[1]}%"></i>`;
  return `<div class="head">${name}<div class="io">${io}</div><div class="mix"><div class="ctl">${ctl}</div><div class="meter">${lv}${lv}</div></div>` +
    `<div class="dly"><span class="knobtri"><input class="val" aria-label="${t.n} delay" value="0.00"></span><button class="ms">ms</button></div></div>`;
}

const row = t => {
  const cls = ['track', t.dev && 'tall', t.group && 'group', t.child && 'child', t.ret && 'ret', t.master && 'mst', t.picked && 'sel-track'].filter(Boolean).join(' ');
  return `<div class="${cls}">${lane(t)}${head(t)}</div>`;
};
$('tracks').innerHTML = tracks.map(row).join('');
$('returns').innerHTML = returns.map(row).join('');

// Rulers and locators
let bars = '';
for (let b = 1; b < 154; b += 4) bars += `<span class="${b % 8 === 1 ? '' : 'minor'}" style="left:${pct(b)}">${b % 8 === 1 && b < 150 ? b : ''}</span>`;
$('bars').innerHTML = bars;
let times = '<i></i>';
for (let s = 0; s <= 305; s += 5) {
  const main = s % 15 === 0;
  times += `<span class="${main ? '' : 'minor'}" style="left:${pct(1 + s * 119 / 240)}">${main ? Math.floor(s / 60) + ':' + String(s % 60).padStart(2, '0') : ''}</span>`;
}
$('times').innerHTML = times;
const loop = $('loop');
loop.style.left = pct(5);
loop.style.width = wid(5, 149);
loop.innerHTML = '<svg viewBox="0 0 10 9"><path d="M1 0l7 4.500-7 4.500" class="ln"/></svg><svg viewBox="0 0 10 9"><path d="M9 0l-7 4.500 7 4.500" class="ln"/></svg>';
const locs = [[5, 'INTRO'], [37, 'CHORUS'], [77, 'BREAK'], [93, 'CHORUS'], [125, 'OUTRO']];
$('locators').innerHTML = locs.map(([b, n]) => `<span style="left:${pct(b)}"><svg viewBox="0 0 10 12"><path d="M.5 1l8 5-8 5z" fill="#8f96a3" stroke="#222a35"/></svg>${n}</span>`).join('');
$('markers').innerHTML = [5, 37, 77, 93, 125].map(b => `<i style="left:${pct(b)}"></i>`).join('') +
  `<i style="left:${pct(149)};top:-11px"></i><i class="play" style="left:${pct(40.55)}"></i>`;

// Overview: the same clips, one thin line per track
let ov = '';
const orect = (a, b, y, h, c) => `<rect x="${(a - 1) * 10}" y="${y}" width="${((b - a) * 10 - .6).toFixed(1)}" height="${h}" fill="${c}"/>`;
tracks.forEach(t => {
  if (t.oc) [...(t.clips || []), ...(t.fills || []), ...(t.bars || [])].forEach(([a, b]) => ov += orect(a, b, t.oy, t.oh || 1, t.oc));
});
[[37, 53], [93, 109]].forEach(([a, b]) => ov += orect(a, (a + b) / 2, 13, 3, '#98a012') + orect((a + b) / 2, b, 13, 3, '#828f45'));
ov += orect(77, 91.4, 15, 2, '#b05f14');
ov += [5, 37, 77, 93, 125].map(b => `<path d="M${(b - 1) * 10} 0v28" stroke="#555d5a"/>`).join('') + '<path d="M395 0v28" stroke="#000" stroke-width="1.500"/>';
$('overview').innerHTML = `<svg viewBox="0 0 1842 28" preserveAspectRatio="none">${ov}</svg><div class="frame"></div>`;

// Knobs: v runs 0..1 over a 270 degree sweep. Small ones sweep from six to three o'clock.
function arc(a, b, r, c) {
  const p = d => { const t = (d - 90) * Math.PI / 180; return (c + r * Math.cos(t)).toFixed(1) + ' ' + (c + r * Math.sin(t)).toFixed(1); };
  return `M${p(a)}A${r} ${r} 0 ${b - a > 180 ? 1 : 0} 1 ${p(b)}`;
}
function knob(v, o = {}) {
  const small = !!o.r, r = o.r || 12, c = r + 2, s = c * 2;
  const lo = small ? -180 : -135, hi = lo + 270, ang = lo + v * 270;
  const t = (ang - 90) * Math.PI / 180;
  const from = o.bi ? Math.min(0, ang) : lo, to = o.bi ? Math.max(0, ang) : ang;
  const ink = o.dead ? '#7d838e' : '#17191c';
  let p = '';
  if (from - lo > 2) p += `<path d="${arc(lo, from, r, c)}" stroke="${ink}"/>`;
  if (hi - to > 2) p += `<path d="${arc(to, hi, r, c)}" stroke="${ink}"/>`;
  if (to - from > 2) p += `<path d="${arc(from, to, r, c)}" stroke="#e9a745"/>`;
  const len = small ? r - 1 : r - 1;
  p += `<path d="M${c} ${c}L${(c + len * Math.cos(t)).toFixed(1)} ${(c + len * Math.sin(t)).toFixed(1)}" stroke="${ink}"/>`;
  return `<svg class="k" viewBox="0 0 ${s} ${s - (small ? 0 : 3)}" fill="none" stroke-width="2">${p}</svg>`;
}
const tri = c => `<svg class="tri" viewBox="0 0 9 7"><path d="M1 1h7l-3.500 5z" fill="${c}" stroke="#333"/></svg>`;
const vk = (l, v, val, o = {}) => `<div class="vk"><span>${l}</span>${o.tri ? tri(o.tri) : ''}${knob(v, o)}<span>${val}</span></div>`;
const hk = (l, v, val, o = {}) => `<div class="hk">${l}${knob(v, { r: 9, ...o })}<span>${val}</span></div>`;
const swap = '<button class="rd" aria-label="Hot swap"><svg viewBox="0 0 11 11"><path d="M2 6a3.500 3.500 0 0 1 5-3M9 5a3.500 3.500 0 0 1-5 3" fill="none" stroke="#000" stroke-width="1.500"/></svg></button><button class="rd" aria-label="Save preset"><svg viewBox="0 0 11 11"><path d="M2.500 2h6.500v7h-6.500z"/><path d="M4 3h3v2h-3z" fill="#c8ccd4"/></svg></button>';
const dh = (name, open, mid = '', foldable = true) => `<div class="dh"><button class="pw" aria-label="${name} on"><svg viewBox="0 0 11 11"><ellipse cx="5.500" cy="5.500" rx="1.500" ry="3" fill="none" stroke="#8aa020"/></svg></button>${foldable ? `<button class="rd" aria-label="Unfold ${name}">${foldIcon(open)}</button>` : ''}<b>${name}</b>${mid}${swap}</div>`;
const link = '<div class="link"><i></i><i></i></div>';
const field = (v, f, label) => `<input class="val" aria-label="${label}" value="${v}" style="--f:${f}%">`;

// Sample waveform as alternating extremes
const ext = [[161, 180], [163, 320], [167, 190], [171, 290], [175, 190], [180, 315], [186, 170], [193, 345], [201, 118], [210, 377], [221, 118], [233, 362], [246, 127], [260, 353],
  [277, 145], [293, 340], [311, 150], [329, 335], [349, 155], [369, 330], [391, 160], [411, 325], [433, 166], [454, 316], [476, 181], [498, 299], [520, 196],
  [541, 280], [563, 220], [586, 262], [609, 234], [633, 251], [657, 238], [681, 246], [706, 242], [740, 245], [780, 244], [1494, 244]];
let wave = `M${ext[0]}`;
ext.slice(1).forEach(([x, y], i) => { const [px, py] = ext[i], d = (x - px) * .4; wave += `C${px + d} ${py} ${x - d} ${y} ${x} ${y}`; });
let ticks = '';
for (let i = 0; i < 16; i++) ticks += `M${160 + i * 91.100} ${i % 4 ? 365 : 345}V377`;
const stamps = ['0:00', '0:00:200', '0:00:400', '0:00:600'].map((s, i) => `<span style="left:${(.7 + i * 26.400).toFixed(1)}%">${s}</span>`).join('');

const simpler = `<article class="device d-sim">${dh('PML_DPV2_KICK_2_TECH_002', false, '<button class="dtab">Sample</button><button class="dtab">Controls</button>')}
<div class="scr sim"><div class="modes">
<button><svg viewBox="0 0 20 14"><path d="M9 10a4 4 0 1 1 4-1M11 7v7M8.500 11l2.500 2.500 2.500-2.500" fill="none" stroke="#ffaa14"/></svg>Classic</button>
<button><svg viewBox="0 0 20 14"><path d="M6 2v10M6 7h9M12 4l3 3-3 3" fill="none" stroke="#666c69"/></svg>1-Shot</button>
<button><svg viewBox="0 0 20 14"><path d="M6 2v10M8.500 2v10M11 2v10M13.500 2v10M16 2v10" fill="none" stroke="#666c69"/></svg>Slice</button></div>
<div><div class="wave"><svg viewBox="150 96 1384 288" preserveAspectRatio="none" fill="none"><path d="M160 110V377M1527 110V377M160 244H1527" stroke="#555b58" vector-effect="non-scaling-stroke"/><path d="${ticks}" stroke="#454b48" vector-effect="non-scaling-stroke"/><path d="M161 111l16 14-16 14zM1527 111l-18 14 18 14z" fill="#6a7183"/><path d="${wave}" stroke="#ffaa0a" stroke-width="2" vector-effect="non-scaling-stroke"/></svg>
${stamps}</div>
<div class="prm"><span>Gain</span><span>Start</span><span>Loop</span><span>Length</span><span>Fade</span><button>LOOP</button><span>Voices</span><span>Retrig</span><button class="warp">WARP</button><span>&nbsp;as</span><button class="rnd">2 Beats</button>
<span class="c">0.0 dB</span><span class="c">0.00 %</span><span>100 %</span><span class="c">100 %</span><span>0.00 %</span><button class="full">SNAP</button><span class="c">6 &nbsp; ▾</span><button class="full r">R</button><span>Complex▾</span><span></span><span class="two"><button class="rnd half">:2</button><button class="rnd half">x2</button></span></div></div></div>
<div class="strip"><div class="flt"><div class="row first"><input type="checkbox" class="sw2" id="flt" checked><label for="flt">Filter</label></div><span class="sel"><select aria-label="Filter shape"><option></option></select><svg viewBox="0 0 24 13"><path d="M3 4h10q3 0 3 5" class="ln15"/></svg></span>
<div class="row"><button class="btn">12</button><button class="btn on">24</button></div>${sel('Clean', 'Filter circuit')}</div>
${hk('Frequency', 1, '22.0 kHz')}${hk('Res', 0, '0.0 %')}<div class="gap"></div><div class="rule"></div>
<div class="lfo"><div class="row"><input type="checkbox" class="sw2" id="lfo" checked><label for="lfo">LFO</label></div><div class="row"><button class="btn on">Hz</button><button class="btn">♪</button></div>
<span class="sel"><select aria-label="LFO shape"><option></option></select><svg viewBox="0 0 24 13"><path d="M1 9c3-8 5-8 7-2s4 4 7-3" class="ln15"/></svg></span>${field('1.00 Hz', 57, 'LFO rate')}</div><div class="rule"></div>
<div class="envs">${hk('Attack', 0, '0.00 ms')}${hk('Decay', .75, '6.20 s')}${hk('Sustain', 1, '0.0 dB')}${hk('Release', .36, '50.0 ms')}${hk('Volume', .34, '-12.0 dB')}</div></div></article>`;

function eqScreen(curve, extra, freqs) {
  let d = '';
  [.5, .6, .7, .8, .9, 2, 3, 4, 5, 6, 7, 8, 9, 20, 30, 40, 50, 60, 70, 80, 90, 200].forEach(n => { d += `M${(328 + 339.5 * Math.log10(n)).toFixed(0)} 90V491`; });
  const v = 'M328 90V491M667 90V491M1007 90V491M205 290H1126';
  const f = freqs ? '<g fill="#6d736f"><text x="60" y="132">100</text><text x="192" y="132">1k</text><text x="320" y="132">10k</text></g>' : '';
  return `<div class="scr"><svg viewBox="0 0 374 133" preserveAspectRatio="xMinYMin slice" fill="none"><g transform="scale(.3827 .3333) translate(-149 -90)"><path d="${d}M205 133H1126M205 211H1126M205 373H1126M205 451H1126" stroke="#363d39" stroke-dasharray="2 2" vector-effect="non-scaling-stroke"/><path d="${v}" stroke="#474e4a" vector-effect="non-scaling-stroke"/></g>
<g fill="#565d59"><text x="8" y="18">12</text><text x="12" y="44">6</text><text x="12" y="70">0</text><text x="8" y="98">-6</text><text x="2" y="124">-12</text></g>${f}
<g transform="scale(.3827 .3333) translate(-149 -90)"><path d="${curve}" stroke="#f2a516" stroke-width="2" vector-effect="non-scaling-stroke"/></g>${extra}</svg></div>`;
}
const shapes = { hp: 'M3 10V6q0-2 3-2h9', bell: 'M2 6.500h3l4-3h4l4 3h3M5 6.500l4 3.500h4l4-3.500', lp: 'M3 4h9q3 0 3 5' };
const band = (i, shape, on, cur) => `<div class="band${cur ? ' cur' : ''}"><span class="sel${on ? '' : ' off'}"><select aria-label="Band ${i} type"><option></option></select><svg viewBox="0 0 24 13"><path d="${shapes[shape]}" class="ln"/>${cur ? '<path d="M7 6l4 5M11 6l-4 5M15 6l-2 3h4M16 7v4" class="ln"/>' : ''}</svg></span><label><input type="checkbox"${on ? ' checked' : ''}>${i}</label></div>`;
const eqNodes = '<circle cx="25" cy="83" r="6.500" fill="#05fcec"/><text x="22" y="87" fill="#134">1</text><circle cx="49" cy="54.500" r="5.500" stroke="#05fcec" stroke-width="2"/><text x="46" y="58" fill="#1fb8b0">4</text><circle cx="300" cy="108" r="5.500" stroke="#05fcec" stroke-width="2"/><text x="297" y="112" fill="#1fb8b0">8</text>';
const eq1 = `<article class="device d-eq">${dh('EQ Eight', false)}<div class="eq"><div class="col">${vk('Freq', .03, '42.5 Hz')}${vk('Gain', .5, '0.00 dB', { tri: '#a0aaa5', bi: 1, dead: 1 })}${vk('Q', .35, '0.66')}</div>
<div class="eqmid">${eqScreen('M166 491C180 380 188 340 200 305C210 268 235 254 277 254C330 254 370 276 450 283C540 292 600 292 667 307C780 335 860 400 975 491', eqNodes, true)}<div class="bands">${band(1, 'hp', 1, 1)}${[2, 3].map(i => band(i, 'bell')).join('')}${band(4, 'bell', 1)}${[5, 6, 7].map(i => band(i, 'bell')).join('')}${band(8, 'lp', 1)}</div></div>
<div class="side"><div><button class="btn" aria-label="Audition"><svg viewBox="0 0 17 11"><path d="M6 9.500V5a2.500 2.500 0 0 1 5 0v4.500" class="ln15"/></svg></button><button class="btn on" aria-label="Analyze"><svg viewBox="0 0 17 11"><path d="M3 9V6M5.500 9V3M8 9V5M10.500 9V2M13 9V5" class="ln"/></svg></button></div>
<b>Mode</b>${sel('Stereo', 'Mode')}<b>Edit</b><button class="btn mute">A</button><b>Adapt. Q</b><button class="btn on">On</button><label for="sc">Scale</label><input id="sc" class="val" value="100 %" style="--f:74%"><label for="gn">Gain</label><input id="gn" class="val" value="-1.50 dB" style="--f:45%"></div></div></article>`;
const eq2 = `<article class="device d-eq last">${dh('EQ Eight', false).replace(swap, '')}<div class="eq"><div class="col">${vk('Freq', .48, '732 Hz')}${vk('Gain', .33, '-4.76 dB', { tri: '#f0a83a', bi: 1 })}${vk('Q', .36, '0.71')}</div><div class="eqmid">${eqScreen('M149 291H1126', '', false)}<div class="bands">${band(1, 'hp')}</div></div></div></article>`;

let dots = '';
for (let x = 8; x < 100; x += x % 38 > 24 ? 3 : 6) dots += `M${x} 0V61`;
const over = `<article class="device d-over">${dh('Overdrive', false, '', false)}<div class="over"><div class="scr"><svg viewBox="0 0 100 61" fill="none"><path d="${dots}M0 40H100" stroke="#343b37" stroke-dasharray="1 2"/><path d="M12 0V61M50 0V61M88 0V61M0 20H100" stroke="#444b47"/><path d="M0 56C14 46 18 22 30 22C44 22 46 60 75 60H100" stroke="#f2a516" stroke-width="1.500"/><circle cx="32" cy="45" r="6" stroke="#05fcec" stroke-width="2"/></svg></div>
<div class="pairs">${field('300 Hz', 32, 'Frequency')}${field('2.27', 23, 'Bandwidth')}</div><div class="pairs">${vk('Drive', .18, '19 %')}${vk('Tone', .04, '0 %')}</div>
<div class="pairs"><span>Dynamics</span>${field('40 %', 40, 'Dynamics')}<span>Dry/Wet</span>${field('26 %', 26, 'Dry/Wet')}</div></div></article>`;

const comp = `<article class="device d-comp">${dh('Compressor', true)}<div class="comp"><div>${vk('Ratio', .52, '2.07 : 1')}${vk('Attack', .63, '12.5 ms')}${vk('Release', .17, '53.6 ms')}<button class="btn auto-rel">Auto</button></div>
<div class="scr"><svg class="gr" viewBox="0 0 123 143" fill="none"><g fill="#6b716e"><text x="10" y="13">Thresh</text><text x="54" y="13">GR</text><text x="90" y="13">Out</text><text x="7" y="138">-14.5 dB</text><text x="84" y="138">2.97 dB</text></g><path d="M18.500 17.500h12v109h-12zM56.500 17.500h10v109h-10zM92.500 17.500h12v109h-12zM18 34.500h12M56 34.500h10M92 34.500h12" stroke="#4b514e"/><path d="M41 69v8l-7-4zM115 63v8l-7-4z" fill="#9a9f9d"/><path d="M19 125h5M25 125h5M93 125h5M99 125h5" stroke="#30e070" stroke-width="3"/><path d="M25 108.500h5M19 117.500h5M99 106.500h5M93 116.500h5" stroke="#60f080"/></svg>
<div class="foot"><svg viewBox="0 0 20 18"><path d="M7 13V9M10 13V5M13 13V8" stroke="#ffaa14" stroke-width="1.500"/></svg><svg viewBox="0 0 20 18" fill="none"><path d="M6 13q1-7 4-7h4" stroke="#6b716e"/></svg><svg viewBox="0 0 20 18"><path d="M4 7v4M6 5v8M8 7v4M10 4v10M12 7v4M14 5v8M16 7v4" stroke="#6b716e"/></svg><span>Knee <span class="c">6.0 dB</span></span></div></div>
<div class="stack"><button class="btn top1">Makeup</button><button class="btn on">Peak</button><button class="btn">RMS</button><button class="btn">Expand</button>${vk('Dry/Wet', .93, '100 %')}</div></div></article>`;

const sat = `<article class="device d-sat">${dh('Saturator', true)}<div class="sat"><div class="satl"><div class="leftc">${vk('Drive', .52, '2.29 dB', { tri: '#f0a83a', bi: 1 })}<button class="btn">DC</button><button class="btn on">Color</button></div>
<div class="rightc"><div class="scr"><svg viewBox="0 0 116 76" fill="none"><path d="M7.500 7.500h84v62h-84zM49.500 7.500v62M7.500 39h84M99.500 7.500h4v62h-4zM105.500 7.500h4v62h-4z" stroke="#4b514e"/><path d="M99 44.500h11" stroke="#aaa"/><path d="M99 68.500h11" stroke="#ffaa14"/><path d="M8 58C22 72 30 68 49 39S76 3 91 18" stroke="#f2a516" stroke-width="2"/></svg></div>${sel('Sinoid Fold', 'Curve')}</div>
<div class="four">${vk('Base', .32, '-12.6', { tri: '#f0a83a', bi: 1 })}${vk('Freq', .17, '107 Hz')}${vk('Width', .04, '0.0 %')}${vk('Depth', .5, '0.00', { tri: '#a0aaa5', bi: 1 })}</div></div>
<div class="satr"><b>Output</b><span>Soft Clip</span><button class="btn">Off</button>${vk('Output', .9, '0.00 dB')}${vk('Dry/Wet', .44, '43.7 %')}</div></div></article>`;

$('chain').innerHTML = '<div class="grip"></div>' + [simpler, eq1, over, comp, sat, eq2].join(link);

// Miniature of the device chain
const th = [[2, 43], [48, 28], [78, 7], [88, 12], [103, 15], [123, 27], [153, 23]];
$('thumbs').innerHTML = th.map(([x, w]) => `<rect x="${x}" y="2" width="${w}" height="16" fill="#b5bcb2"/><rect x="${x + 1}" y="4" width="${w - 3}" height="${w > 20 ? 10 : 8}" fill="#131915"/>`).join('') +
  '<path d="M4 9l1-3 4 1 6 1 20 1-20 1-6 1-5 2z" fill="#c98a16"/><path d="M50 9c3-4 14 0 24 4M125 9h22" fill="none" stroke="#c98a16"/><path d="M18 13h12" stroke="#05c8c0"/><rect x="1" y="1" width="120" height="18" fill="none" stroke="#000" stroke-width="2"/>';
```
